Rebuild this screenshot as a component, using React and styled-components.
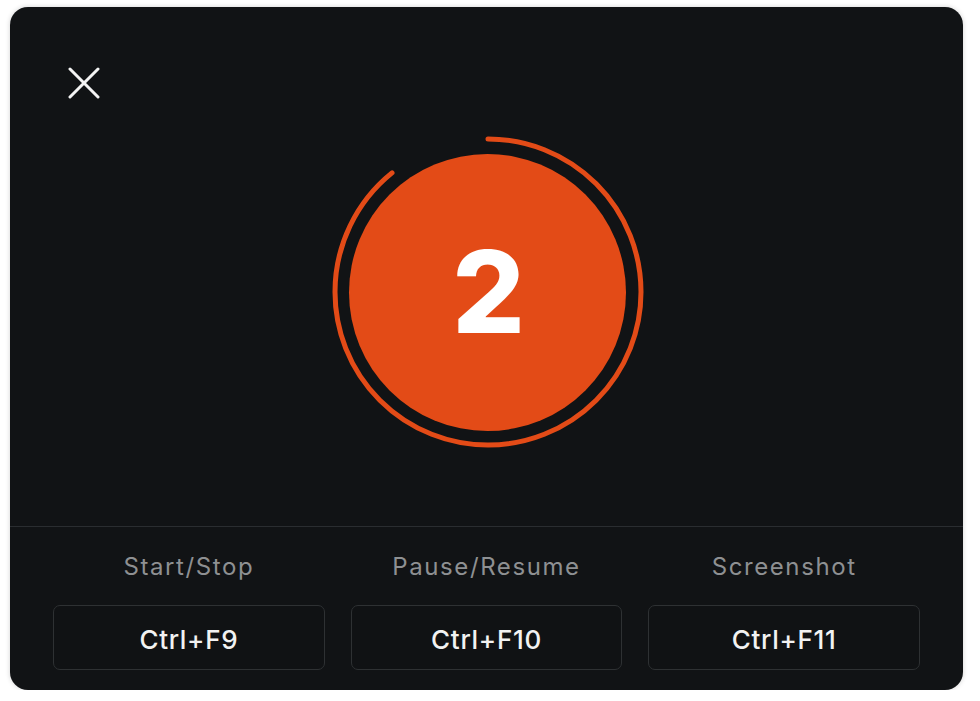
import React from 'react'
import styled, { createGlobalStyle } from 'styled-components'

const GlobalStyle = createGlobalStyle`
  html, body {
    margin: 0;
    padding: 0;
    background: #ffffff;
  }
  body {
    font-family: Inter, "Noto Sans", "Liberation Sans", sans-serif;
  }
`;

const Page = styled.div`
  padding: 7px 0 0 10px;
`;

const Panel = styled.section`
  width: 953px;
  height: 683px;
  background: #111315;
  border-radius: 18px;
  box-shadow: 0 0 5px rgba(0, 0, 0, .18);
  display: flex;
  flex-direction: column;
  overflow: hidden;
`;

const Stage = styled.div`
  height: 520px;
  box-sizing: border-box;
  padding: 60px 0 0 58px;
  display: flex;
  flex-direction: column;
  border-bottom: 1px solid #2a2d30;
`;

const CloseButton = styled.button`
  align-self: flex-start;
  width: 32px;
  height: 32px;
  padding: 0;
  margin: 0;
  border: 0;
  background: transparent;
  cursor: pointer;
  display: flex;
`;

const Countdown = styled.div`
  position: relative;
  align-self: center;
  width: 320px;
  height: 320px;
  margin: 33px 0 0 -56px;
  display: flex;
  align-items: center;
  justify-content: center;
`;

const Ring = styled.svg`
  position: absolute;
  inset: 0;
`;

const Disc = styled.div`
  width: 277px;
  height: 277px;
  border-radius: 50%;
  background: #e34b17;
  display: flex;
  align-items: center;
  justify-content: center;
`;

const Digit = styled.span`
  color: #ffffff;
  font-family: Inter, "Liberation Sans", sans-serif;
  font-weight: 800;
  font-size: 114px;
  line-height: 1;
  letter-spacing: -2px;
`;

const Shortcuts = styled.div`
  flex: 1;
  display: grid;
  grid-template-columns: repeat(3, 1fr);
  column-gap: 26px;
  padding: 25px 43px 0;
`;

const Shortcut = styled.div`
  display: flex;
  flex-direction: column;
  align-items: stretch;
  gap: 23px;
`;

const ShortcutLabel = styled.span`
  text-align: center;
  color: #8e9092;
  font-size: 24px;
  line-height: 30px;
  letter-spacing: 1.6px;
`;

const KeyBox = styled.div`
  height: 65px;
  box-sizing: border-box;
  border: 1.5px solid #2e3133;
  border-radius: 7px;
  background: #101214;
  display: flex;
  align-items: center;
  justify-content: center;
  padding-top: 3px;
  color: #f2f2f2;
  font-size: 26px;
  font-weight: 500;
  letter-spacing: 0.7px;
`;

const shortcuts = [
  { label: 'Start/Stop', keys: 'Ctrl+F9' },
  { label: 'Pause/Resume', keys: 'Ctrl+F10' },
  { label: 'Screenshot', keys: 'Ctrl+F11' },
];

const R = 153;
const CIRC = 2 * Math.PI * R;
const progress = 0.9;

function App() {
  return (
    <Page>
      <GlobalStyle />
      <Panel>
        <Stage>
          <CloseButton aria-label="Close">
            <svg width="32" height="32" viewBox="0 0 32 32">
              <path d="M2 2 L30 30 M30 2 L2 30" stroke="#f4f4f4" strokeWidth="3" strokeLinecap="round" />
            </svg>
          </CloseButton>
          <Countdown>
            <Ring width="320" height="320" viewBox="0 0 320 320">
              <circle
                cx="160"
                cy="160"
                r={R}
                fill="none"
                stroke="#e34b17"
                strokeWidth="5"
                strokeLinecap="round"
                strokeDasharray={`${CIRC * progress - 8} ${CIRC}`}
                transform="rotate(-90 160 160)"
              />
            </Ring>
            <Disc>
              <Digit>2</Digit>
            </Disc>
          </Countdown>
        </Stage>
        <Shortcuts>
          {shortcuts.map((s) => (
            <Shortcut key={s.label}>
              <ShortcutLabel>{s.label}</ShortcutLabel>
              <KeyBox>{s.keys}</KeyBox>
            </Shortcut>
          ))}
        </Shortcuts>
      </Panel>
    </Page>
  );
}

export default App
